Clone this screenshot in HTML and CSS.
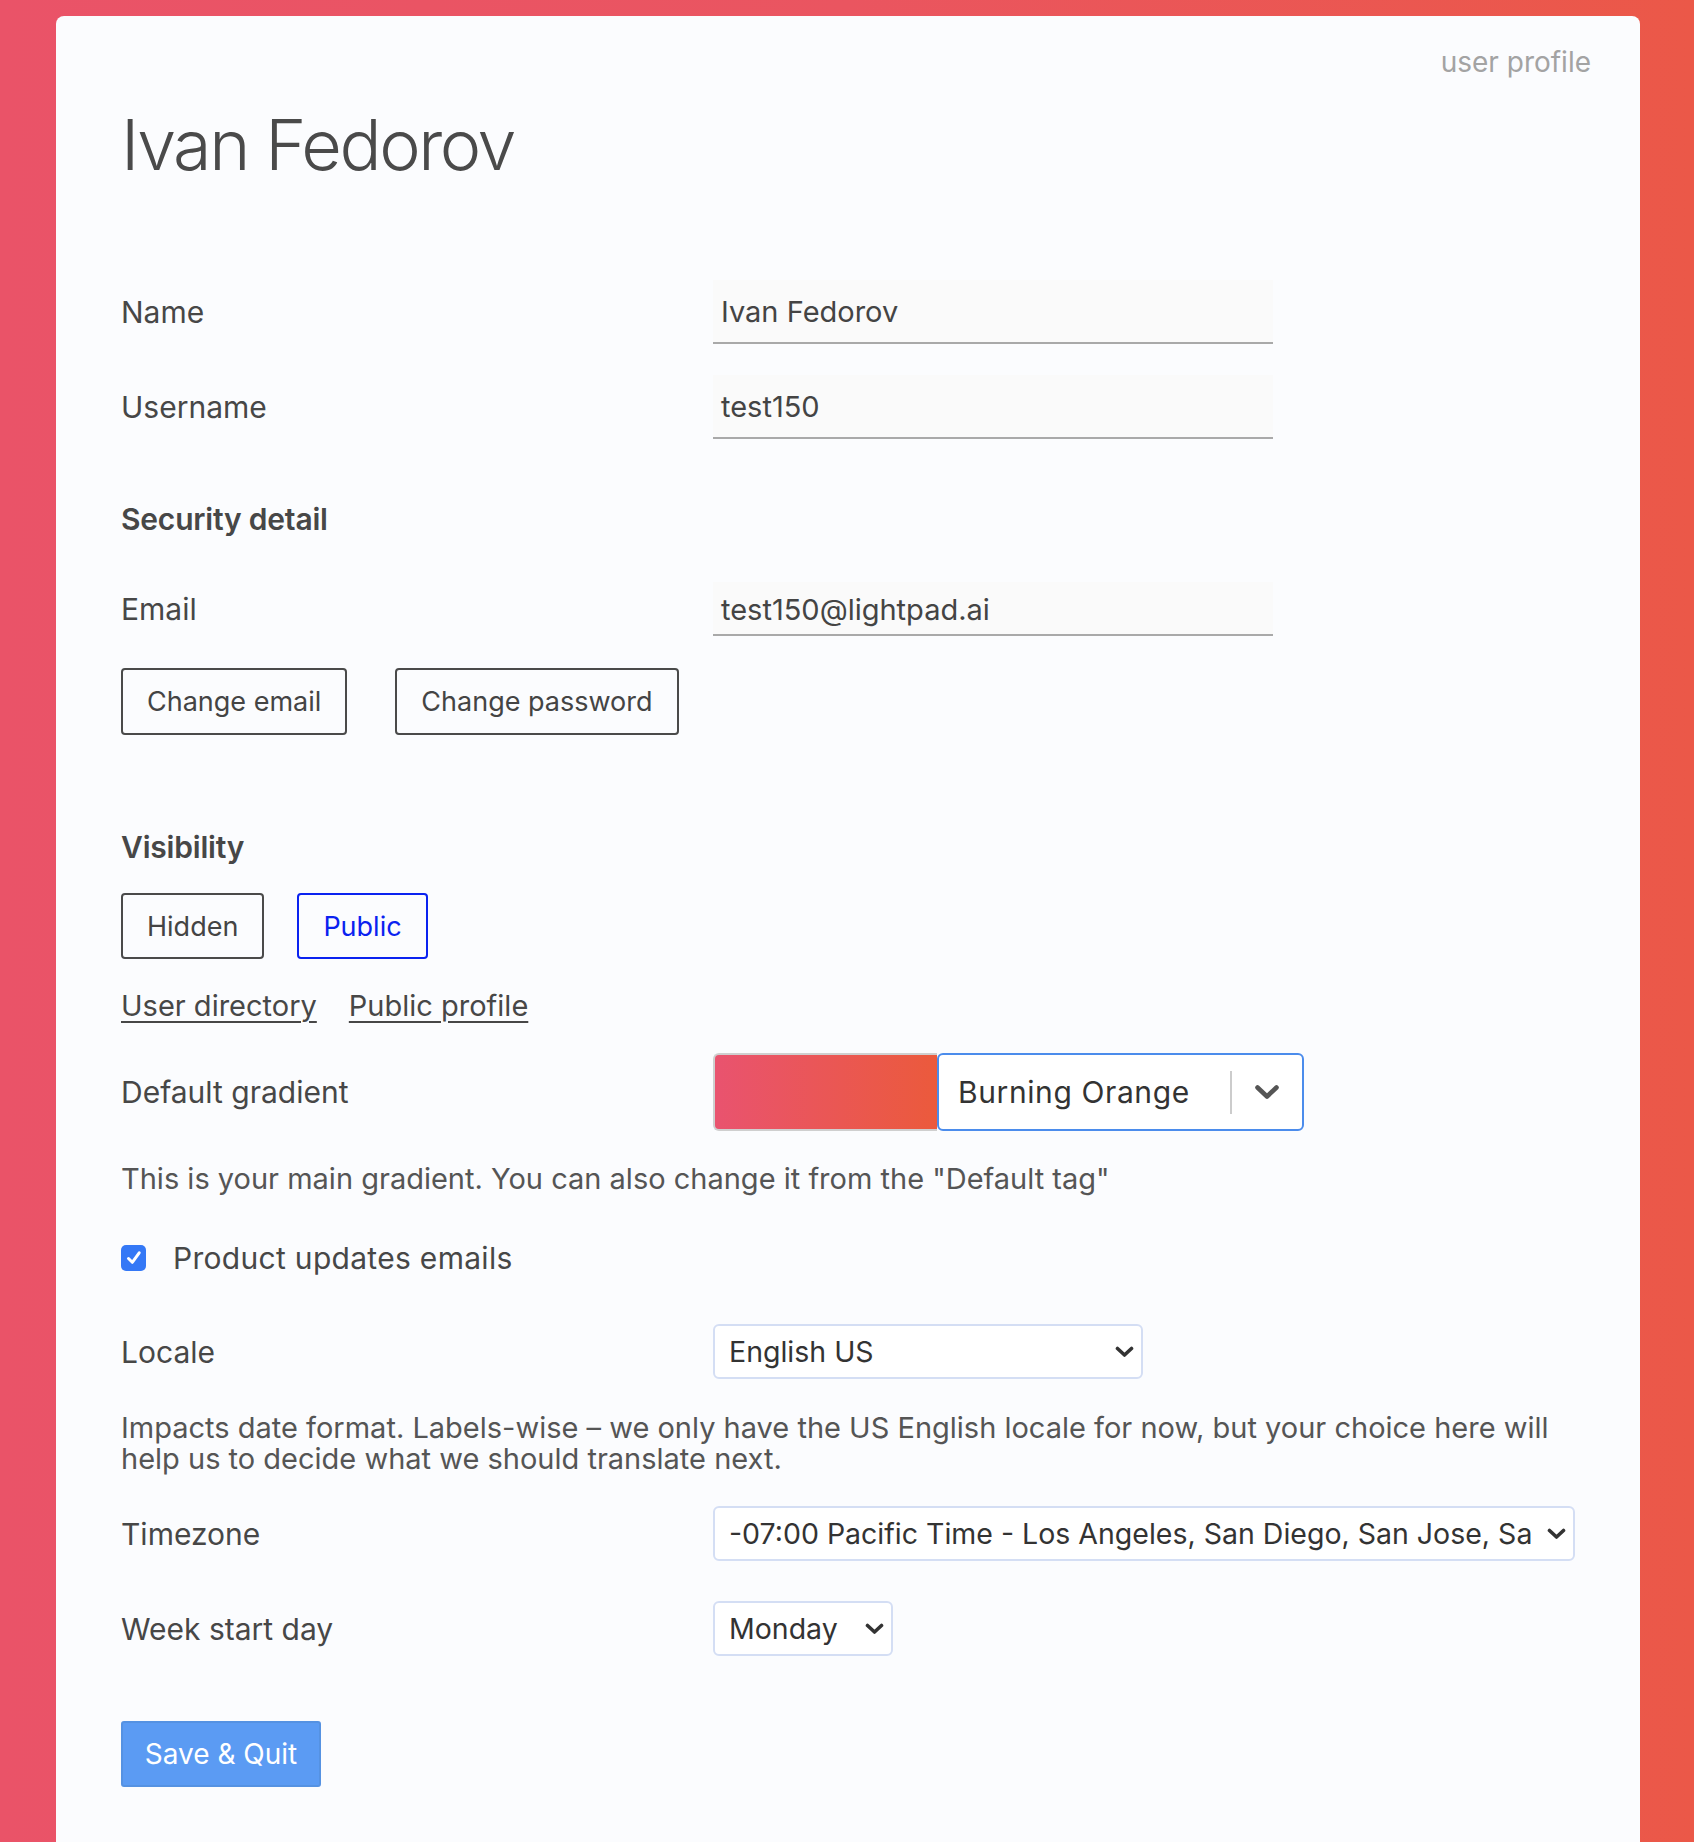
FILE: index.html
```html
<!DOCTYPE html>
<html lang="en">
<head>
<meta charset="utf-8">
<title>User profile</title>
<link rel="stylesheet" href="styles.css">
</head>
<body>
<main class="card">
  <div class="topline"><span class="crumb">user profile</span></div>
  <h1 class="title">Ivan Fedorov</h1>

  <div class="row row-name">
    <label class="label">Name</label>
    <div class="input tall">Ivan Fedorov</div>
  </div>
  <div class="row row-user">
    <label class="label">Username</label>
    <div class="input tall">test150</div>
  </div>

  <h2 class="heading h-security">Security detail</h2>
  <div class="row row-email">
    <label class="label">Email</label>
    <div class="input short">test150@lightpad.ai</div>
  </div>
  <div class="btns btns-security">
    <button class="btn">Change email</button>
    <button class="btn">Change password</button>
  </div>

  <h2 class="heading h-visibility">Visibility</h2>
  <div class="btns btns-vis">
    <button class="btn">Hidden</button>
    <button class="btn active">Public</button>
  </div>
  <div class="links">
    <a class="link" href="#">User directory</a>
    <a class="link" href="#">Public profile</a>
  </div>

  <div class="row row-gradient">
    <label class="label">Default gradient</label>
    <div class="gradpick">
      <div class="swatch"></div>
      <div class="gradselect">
        <span class="gradname">Burning Orange</span>
        <span class="sep"></span>
        <svg class="gchev" width="26" height="17" viewBox="0 0 26 17"><path d="M3.5 3.5 L13 12.5 L22.5 3.5" fill="none" stroke="#555" stroke-width="4.6" stroke-linecap="round" stroke-linejoin="round"/></svg>
      </div>
    </div>
  </div>
  <p class="note note-grad">This is your main gradient. You can also change it from the "Default tag"</p>

  <div class="check">
    <span class="box"><svg width="20" height="20" viewBox="0 0 20 20"><path d="M4.5 10.5 L8.3 14.3 L15.2 4.8" fill="none" stroke="#fff" stroke-width="3" stroke-linecap="round" stroke-linejoin="round"/></svg></span>
    <span class="checklabel">Product updates emails</span>
  </div>

  <div class="row row-locale">
    <label class="label">Locale</label>
    <div class="select sel-locale"><span class="seltext">English US</span><svg class="schev" width="19" height="12" viewBox="0 0 19 12"><path d="M2.5 2.5 L9.5 9 L16.5 2.5" fill="none" stroke="#333" stroke-width="3.6" stroke-linecap="round" stroke-linejoin="round"/></svg></div>
  </div>
  <p class="note note-locale">Impacts date format. Labels-wise – we only have the US English locale for now, but your choice here will help us to decide what we should translate next.</p>

  <div class="row row-tz">
    <label class="label">Timezone</label>
    <div class="select sel-tz"><span class="seltext">-07:00 Pacific Time - Los Angeles, San Diego, San Jose, San Francisco</span><svg class="schev" width="19" height="12" viewBox="0 0 19 12"><path d="M2.5 2.5 L9.5 9 L16.5 2.5" fill="none" stroke="#333" stroke-width="3.6" stroke-linecap="round" stroke-linejoin="round"/></svg></div>
  </div>
  <div class="row row-week">
    <label class="label">Week start day</label>
    <div class="select sel-week"><span class="seltext">Monday</span><svg class="schev" width="19" height="12" viewBox="0 0 19 12"><path d="M2.5 2.5 L9.5 9 L16.5 2.5" fill="none" stroke="#333" stroke-width="3.6" stroke-linecap="round" stroke-linejoin="round"/></svg></div>
  </div>

  <button class="save">Save &amp; Quit</button>
</main>
</body>
</html>
```
FILE: styles.css
```css
* { box-sizing: border-box; }
html, body { margin: 0; padding: 0; }
body {
  min-height: 1842px;
  background: linear-gradient(to right, #ea5368 0%, #ea5560 50%, #eb5848 100%);
  font-family: "Inter", "Liberation Sans", sans-serif;
  color: #474747;
  padding: 16px 54px 0 56px;
  overflow: hidden;
}
.card {
  background: #fbfcfe;
  border-radius: 8px 8px 0 0;
  padding: 29px 49px 60px 65px;
  min-height: 1900px;
}
.topline { display: flex; justify-content: flex-end; }
.crumb { font-size: 28px; line-height: 34px; color: #a3a3a3; }
.title {
  margin: 31px 0 0;
  font-size: 70px;
  line-height: 70px;
  font-weight: 300;
  letter-spacing: -2.4px;
  color: #4a4a4a;
}
.row {
  display: grid;
  grid-template-columns: 592px auto;
  align-items: center;
  justify-content: start;
}
.label { font-size: 30px; line-height: 36px; color: #474747; }
.input {
  width: 560px;
  background: #fafafa;
  border-bottom: 2px solid #a9a9a9;
  padding-left: 8px;
  font-size: 29px;
  color: #444;
  display: flex;
  align-items: center;
}
.input.tall { height: 64px; }
.input.short { height: 54px; padding-top: 2px; }
.row-name { margin-top: 100px; }
.row-user { margin-top: 31px; }
.heading {
  margin: 0;
  font-size: 30px;
  line-height: 36px;
  font-weight: 600;
  letter-spacing: -0.2px;
  color: #474747;
}
.h-security { margin-top: 62px; }
.row-email { margin-top: 45px; }
.btns { display: flex; }
.btns-security { margin-top: 32px; gap: 48px; }
.btn {
  height: 67px;
  padding: 0 24px;
  border: 2px solid #4a4a4a;
  border-radius: 4px;
  background: transparent;
  font-family: inherit;
  font-size: 27px;
  color: #444;
}
.h-visibility { margin-top: 94px; }
.btns-vis { margin-top: 28px; gap: 33px; }
.btns-vis .btn { height: 66px; }
.btn.active { border-color: #0a22f0; color: #0a22f0; }
.links { margin-top: 29px; display: flex; gap: 32px; }
.link {
  font-size: 29px;
  line-height: 36px;
  color: #474747;
  text-decoration: underline;
  text-decoration-thickness: 2px;
  text-underline-offset: 5px;
}
.row-gradient { margin-top: 29px; }
.gradpick { display: flex; height: 78px; }
.swatch {
  width: 224px;
  border: 2px solid #cfcfcf;
  border-right: none;
  border-radius: 6px 0 0 6px;
  background: linear-gradient(to right, #e9536f, #eb5a3c);
}
.gradselect {
  width: 367px;
  border: 2px solid #4b8cec;
  border-radius: 6px;
  background: #fff;
  display: flex;
  align-items: center;
  padding-left: 19px;
}
.gradname { font-size: 30px; letter-spacing: 0.6px; color: #333; width: 272px; }
.sep { width: 2px; height: 43px; background: #cccccc; }
.gchev { margin-left: 22px; }
.note { margin: 0; font-size: 29px; color: #555; }
.note-grad { margin-top: 30px; line-height: 36px; }
.check { margin-top: 43px; display: flex; align-items: center; height: 36px; }
.box {
  width: 25px;
  height: 26px;
  border-radius: 5px;
  background: #3478f6;
  display: flex;
  align-items: center;
  justify-content: center;
}
.checklabel { margin-left: 27px; font-size: 30px; letter-spacing: 0.3px; color: #474747; }
.select {
  height: 55px;
  border: 2px solid #d4def4;
  border-radius: 6px;
  background: #fff;
  display: flex;
  align-items: center;
  padding: 0 7px 0 14px;
  overflow: hidden;
}
.seltext { font-size: 28.5px; color: #333; white-space: nowrap; overflow: hidden; text-overflow: clip; flex: 1; min-width: 0; }
.schev { flex: none; margin-left: 13px; }
.row-locale { margin-top: 48px; }
.sel-locale { width: 430px; }
.note-locale { margin-top: 33px; line-height: 31px; }
.row-tz { margin-top: 32px; }
.sel-tz { width: 862px; }
.row-week { margin-top: 40px; }
.sel-week { width: 180px; }
.save {
  display: block;
  margin-top: 65px;
  width: 200px;
  height: 66px;
  border: 2px solid #5592e2;
  border-radius: 3px;
  background: #5b9bf3;
  color: #fff;
  font-family: inherit;
  font-size: 28px;
}
```
